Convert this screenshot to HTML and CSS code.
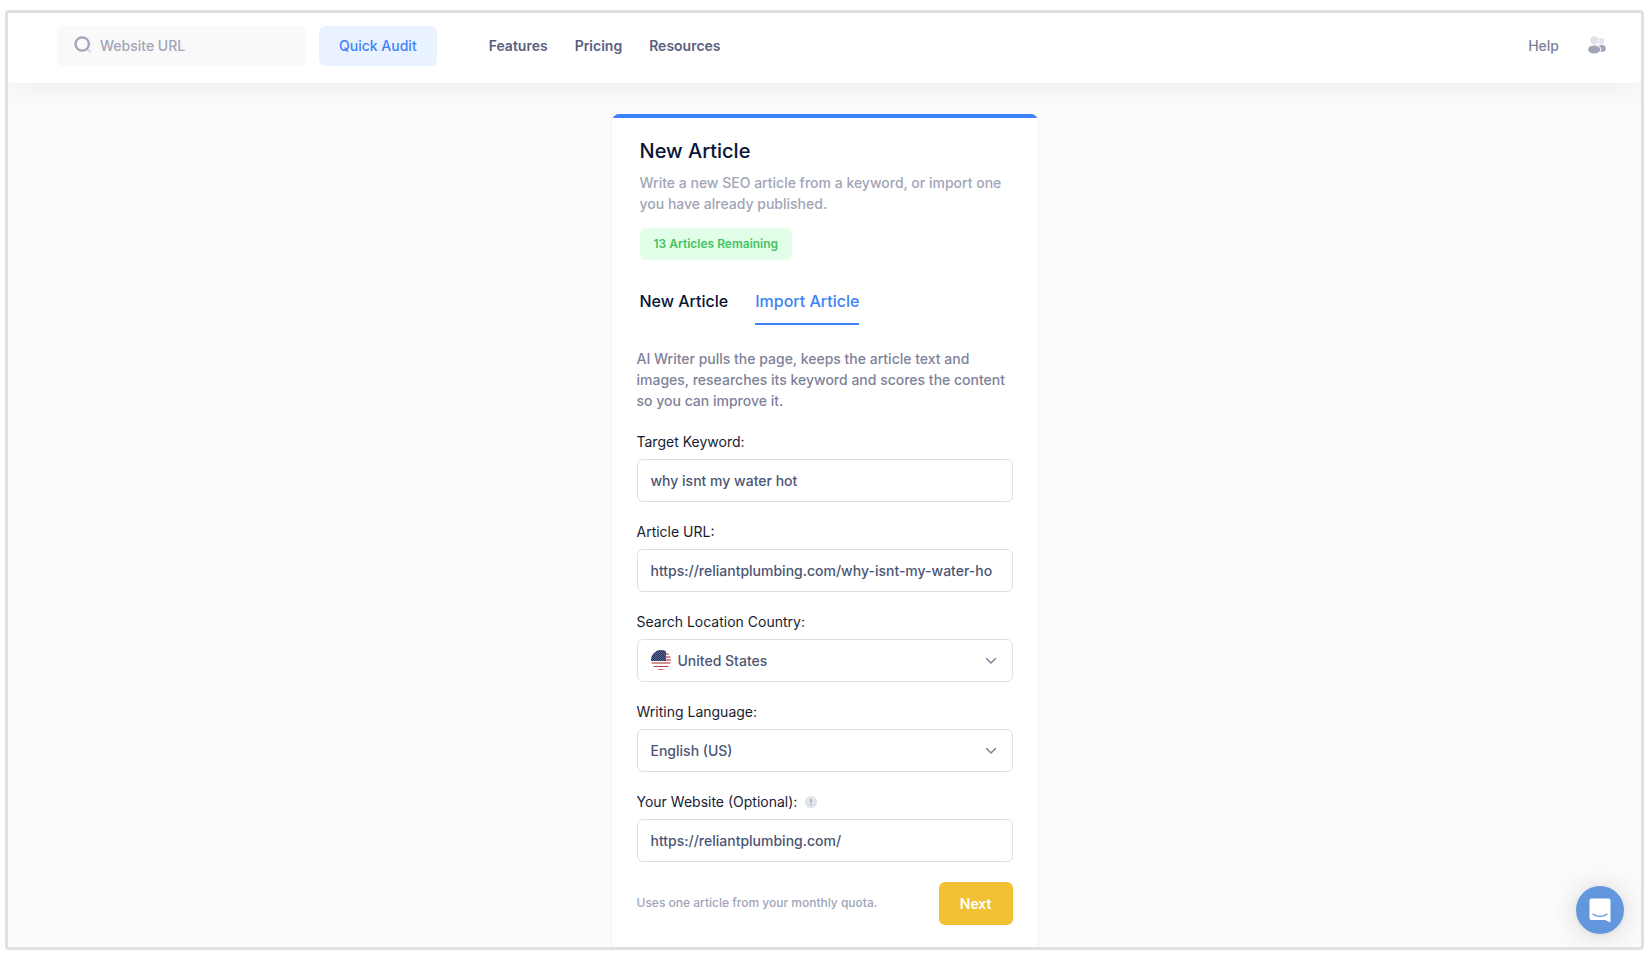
FILE: index.html
```html
<!DOCTYPE html>
<html lang="en">
<head>
  <meta charset="UTF-8">
  <meta name="viewport" content="width=device-width, initial-scale=1.0">
  <title>New Article</title>
  <link rel="stylesheet" href="styles.css">
</head>
<body>
  <div class="app">
    <header class="topbar">
      <form class="audit-form">
        <label class="search">
          <svg class="search-icon" width="18" height="18" viewBox="0 0 18 18" aria-hidden="true">
            <path d="M13.500 13.500l2.500 2" stroke="#dcdee6" stroke-width="2.4" stroke-linecap="round"/>
            <circle cx="8.2" cy="8" r="6.700" fill="none" stroke="#a1a5b7" stroke-width="2.3"/>
          </svg>
          <input type="text" name="site" placeholder="Website URL" aria-label="Website URL">
        </label>
        <button type="button" class="btn btn-light">Quick Audit</button>
      </form>
      <nav class="main-nav">
        <a href="#">Features</a>
        <a href="#">Pricing</a>
        <a href="#">Resources</a>
      </nav>
      <div class="user-nav">
        <a href="#">Help</a>
        <a href="#" class="account" aria-label="Account">
          <svg width="18" height="18" viewBox="0 0 18 18" aria-hidden="true">
            <circle cx="13" cy="5.2" r="3.2" fill="#e1e3ea"/>
            <ellipse cx="13.6" cy="12.4" rx="4.2" ry="3.4" fill="#a1a5b7"/>
            <circle cx="6.3" cy="4.5" r="5" fill="#fff"/>
            <ellipse cx="6.3" cy="13.2" rx="7" ry="4.6" fill="#fff"/>
            <circle cx="6.3" cy="4.5" r="4.2" fill="#e1e3ea"/>
            <ellipse cx="6.2" cy="13.4" rx="6.1" ry="4" fill="#a1a5b7"/>
          </svg>
        </a>
      </div>
    </header>

    <main class="content">
      <section class="card">
        <div class="card-head">
          <h1>New Article</h1>
          <p class="subtitle">Write a new SEO article from a keyword, or import one you have already published.</p>
          <span class="badge">13 Articles Remaining</span>
          <nav class="tabs">
            <a href="#" class="tab">New Article</a>
            <a href="#" class="tab active">Import Article</a>
          </nav>
        </div>

        <form class="article-form">
          <p class="intro">AI Writer pulls the page, keeps the article text and images, researches its keyword and scores the content so you can improve it.</p>

          <div class="field">
            <label for="keyword">Target Keyword:</label>
            <input type="text" id="keyword" class="control" value="why isnt my water hot">
          </div>

          <div class="field">
            <label for="url">Article URL:</label>
            <input type="text" id="url" class="control" value="https://reliantplumbing.com/why-isnt-my-water-hot/">
          </div>

          <div class="field">
            <label for="country">Search Location Country:</label>
            <div class="select-wrap">
              <svg class="flag" width="20" height="20" viewBox="0 0 20 20" aria-hidden="true">
                <defs>
                  <clipPath id="round"><circle cx="10" cy="10" r="10"/></clipPath>
                  <pattern id="stars" width="2" height="2" patternUnits="userSpaceOnUse">
                    <rect width="1" height="1" fill="#5f6c92"/>
                    <rect x="1" y="1" width="1" height="1" fill="#5f6c92"/>
                  </pattern>
                </defs>
                <g clip-path="url(#round)">
                  <rect width="20" height="20" fill="#fff"/>
                  <path d="M0 1h20M0 4h20M0 7h20M0 10h20M0 13h20" stroke="#d98e8e" stroke-width="2"/>
                  <path d="M0 16.5h20M0 19.5h20" stroke="#b93c40" stroke-width="1"/>
                  <rect width="15" height="11" fill="#22305f"/>
                  <rect width="15" height="11" fill="url(#stars)"/>
                </g>
              </svg>
              <select id="country" class="control has-flag">
                <option>United States</option>
              </select>
              <svg class="chevron" width="12" height="8" viewBox="0 0 12 8" aria-hidden="true"><path d="M1.5 1.5L6 6l4.500-4.500"/></svg>
            </div>
          </div>

          <div class="field">
            <label for="language">Writing Language:</label>
            <div class="select-wrap">
              <select id="language" class="control">
                <option>English (US)</option>
              </select>
              <svg class="chevron" width="12" height="8" viewBox="0 0 12 8" aria-hidden="true"><path d="M1.5 1.5L6 6l4.500-4.500"/></svg>
            </div>
          </div>

          <div class="field">
            <label for="website">Your Website (Optional):
              <svg class="hint" width="12" height="12" viewBox="0 0 12 12" aria-hidden="true">
                <circle cx="6" cy="6" r="6" fill="#e1e3ea"/>
                <path d="M6 3v3.500M6 8v1.200" stroke="#a1a5b7" stroke-width="1.500"/>
              </svg>
            </label>
            <input type="text" id="website" class="control" value="https://reliantplumbing.com/">
          </div>

          <div class="form-footer">
            <span class="note">Uses one article from your monthly quota.</span>
            <button type="button" class="btn btn-next">Next</button>
          </div>
        </form>
      </section>
    </main>

    <button type="button" class="chat" aria-label="Open chat">
      <svg width="22" height="25" viewBox="0 0 22 25" aria-hidden="true">
        <path d="M2.500 0.500h17a2 2 0 0 1 2 2v22l-5.500-2.500H2.500a2 2 0 0 1-2-2v-17.500a2 2 0 0 1 2-2z" fill="#fff"/>
        <path d="M4 16c4 3.200 10 3.200 14 0" fill="none" stroke="#6296dd" stroke-width="1.400" stroke-linecap="round"/>
      </svg>
    </button>
  </div>
</body>
</html>
```
FILE: styles.css
```css
* {
  box-sizing: border-box;
}
body {
  margin: 0;
  padding: 10px 6px 10px 5px;
  font-family: Inter, "Liberation Sans", sans-serif;
  font-size: 14px;
  font-weight: 500;
  line-height: 21px;
  color: #181c32;
  background-color: #fff;
}
a {
  color: inherit;
  text-decoration: none;
}
button, input, select {
  font: inherit;
}
.app {
  position: relative;
  display: flex;
  flex-direction: column;
  height: calc(100vh - 20px);
  overflow: hidden;
  border: 3px solid #e0e0e0;
  border-radius: 4px;
  background-color: #fcfcfc;
}

/* Top bar */
.topbar {
  display: flex;
  flex-shrink: 0;
  align-items: center;
  padding: 13px 35px 17px 49px;
  background-color: #fff;
  box-shadow: 0 10px 30px rgba(0, 0, 0, 0.05);
}
.audit-form {
  display: flex;
  gap: 13px;
}
.search {
  display: flex;
  align-items: center;
  gap: 8px;
  width: 249px;
  height: 40px;
  padding: 0 17px 2px;
  border-radius: 6px;
  background-color: #f9f9f9;
}
.search-icon {
  flex-shrink: 0;
}
.search input {
  width: 100%;
  min-width: 0;
  padding: 0;
  border: none;
  outline: none;
  background: none;
}
.search input::placeholder {
  color: #a1a5b7;
}
.btn {
  border: none;
  border-radius: 6px;
  cursor: pointer;
}
.btn-light {
  height: 40px;
  padding: 0 20px 2px;
  color: #3e82f7;
  background-color: #eaf2ff;
}
.main-nav, .user-nav {
  display: flex;
  align-items: center;
  padding-bottom: 2px;
}
.main-nav {
  gap: 27px;
  margin-left: 52px;
  font-weight: 600;
  color: #5a6080;
}
.user-nav {
  gap: 29px;
  margin-left: auto;
  color: #7e8299;
}
.account {
  display: flex;
}

/* Card */
.content {
  display: flex;
  justify-content: center;
  padding: 31px 16px;
}
.card {
  width: 100%;
  max-width: 428px;
  overflow: hidden;
  border: 1px solid #f1f1f2;
  border-top: none;
  border-radius: 8px;
  background-color: #fff;
}
.card::before {
  content: "";
  display: block;
  height: 4px;
  background-color: #3e82f7;
}
.card-head {
  padding: 19px 28px 0;
}
.card-head h1 {
  margin: 0 0 7px;
  font-size: 20px;
  font-weight: 500;
  line-height: 28px;
  color: #071437;
}
.subtitle {
  margin: 0 0 14px;
  color: #a1a5b7;
}
.badge {
  display: inline-block;
  padding: 0 14px;
  border-radius: 6px;
  font-size: 12px;
  font-weight: 600;
  line-height: 32px;
  color: #47c363;
  background-color: #e1fee9;
}
.tabs {
  display: flex;
  gap: 27px;
  margin-top: 26px;
  font-size: 16px;
  color: #071437;
}
.tab {
  padding: 5px 0 11px;
  border-bottom: 2px solid transparent;
}
.tab.active {
  border-color: #3e82f7;
  color: #3e82f7;
}

/* Form */
.article-form {
  padding: 23px 25px 28px;
}
.intro {
  margin: 0 0 20px;
  color: #7e8299;
}
.field {
  margin-bottom: 19px;
}
.field label {
  display: flex;
  align-items: center;
  gap: 8px;
  margin-bottom: 7px;
  font-weight: 400;
}
.control {
  display: block;
  width: 100%;
  height: 43px;
  padding: 0 20px 0 13px;
  border: 1px solid #dbdfe9;
  border-radius: 6px;
  outline: none;
  appearance: none;
  color: #4b5675;
  background-color: #fff;
}
.control:focus {
  border-color: #b5b5c3;
}
.has-flag {
  padding-left: 40px;
}
.select-wrap {
  position: relative;
}
.flag {
  position: absolute;
  top: 11px;
  left: 14px;
}
.chevron {
  position: absolute;
  top: 18px;
  right: 16px;
  fill: none;
  stroke: #7e8299;
  stroke-width: 1.5;
  stroke-linecap: round;
  stroke-linejoin: round;
  pointer-events: none;
}
.form-footer {
  display: flex;
  align-items: center;
  justify-content: space-between;
  padding-top: 1px;
}
.note {
  padding-bottom: 2px;
  font-size: 12px;
  color: #a1a5b7;
}
.btn-next {
  height: 43px;
  padding: 0 21px;
  font-weight: 600;
  color: #fff;
  background-color: #f1c033;
}

/* Chat launcher */
.chat {
  position: absolute;
  right: 17px;
  bottom: 13px;
  display: flex;
  align-items: center;
  justify-content: center;
  width: 48px;
  height: 48px;
  padding: 0;
  border: none;
  border-radius: 50%;
  background-color: #6296dd;
  box-shadow: 0 1px 6px rgba(0, 0, 0, 0.06), 0 2px 32px rgba(0, 0, 0, 0.16);
  cursor: pointer;
}
```
